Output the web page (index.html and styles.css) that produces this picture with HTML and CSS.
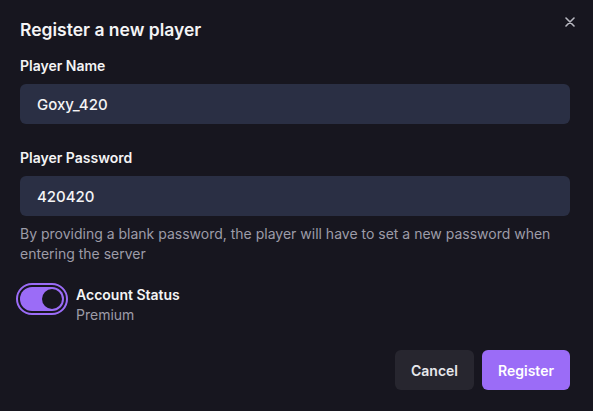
FILE: index.html
```html
<!DOCTYPE html>
<html lang="en">
<head>
<meta charset="utf-8">
<title>Register a new player</title>
<link rel="stylesheet" href="styles.css">
</head>
<body>
<div class="dialog">
  <button class="close" aria-label="Close">
    <svg width="10" height="10" viewBox="0 0 10 10"><path d="M1 1L9 9M9 1L1 9" stroke="currentColor" stroke-width="1.6" stroke-linecap="round"/></svg>
  </button>
  <h1 class="title">Register a new player</h1>
  <div class="field">
    <label class="label">Player Name</label>
    <div class="input">Goxy_420</div>
  </div>
  <div class="field field-second">
    <label class="label">Player Password</label>
    <div class="input">420420</div>
    <p class="help">By providing a blank password, the player will have to set a new password when entering the server</p>
  </div>
  <div class="switch-row">
    <div class="switch"><div class="thumb"></div></div>
    <div class="switch-text">
      <div class="switch-title">Account Status</div>
      <div class="switch-sub">Premium</div>
    </div>
  </div>
  <div class="actions">
    <button class="btn btn-cancel">Cancel</button>
    <button class="btn btn-primary">Register</button>
  </div>
</div>
</body>
</html>
```
FILE: styles.css
```css
html, body {
  margin: 0;
  background: #17161f;
  font-family: Inter, "Noto Sans", sans-serif;
  color: #f4f4f5;
}
.dialog {
  position: relative;
  padding: 18px 23px 0 20px;
}
.close {
  position: absolute;
  top: 17px;
  right: 18px;
  width: 10px;
  height: 10px;
  padding: 0;
  border: 0;
  background: none;
  color: #b8b8c0;
  display: flex;
}
.title {
  margin: 0;
  font-size: 17.5px;
  line-height: 24px;
  font-weight: 600;
}
.field {
  margin-top: 14px;
  display: flex;
  flex-direction: column;
}
.field-second {
  margin-top: 24px;
}
.label {
  font-size: 14px;
  line-height: 20px;
  font-weight: 600;
  margin-bottom: 8px;
}
.input {
  height: 40px;
  box-sizing: border-box;
  background: #2a2f44;
  border-radius: 6px;
  padding: 0 17px;
  display: flex;
  align-items: center;
  font-size: 15px;
  font-weight: 500;
  color: #f4f4f5;
}
.help {
  margin: 8px 0 0;
  font-size: 14px;
  line-height: 20px;
  color: #9d9ca8;
}
.switch-row {
  margin-top: 21px;
  display: flex;
  gap: 12px;
}
.switch {
  margin-top: 2px;
  width: 44px;
  height: 24px;
  box-sizing: border-box;
  padding: 2px;
  border-radius: 12px;
  background: #9b6cf7;
  outline: 2px solid #9b6cf7;
  outline-offset: 2px;
  display: flex;
  justify-content: flex-end;
}
.thumb {
  width: 20px;
  height: 20px;
  border-radius: 50%;
  background: #17161f;
}
.switch-title {
  font-size: 14px;
  line-height: 20px;
  font-weight: 600;
}
.switch-sub {
  font-size: 14px;
  line-height: 20px;
  color: #9d9ca8;
}
.actions {
  margin-top: 25px;
  display: flex;
  justify-content: flex-end;
  gap: 8px;
}
.btn {
  height: 40px;
  padding: 0 16px;
  border: 0;
  border-radius: 6px;
  font-family: inherit;
  font-size: 14px;
  font-weight: 600;
}
.btn-cancel {
  background: #27262f;
  color: #e8e8ec;
}
.btn-primary {
  background: #9b6cf7;
  color: #ffffff;
}
```
